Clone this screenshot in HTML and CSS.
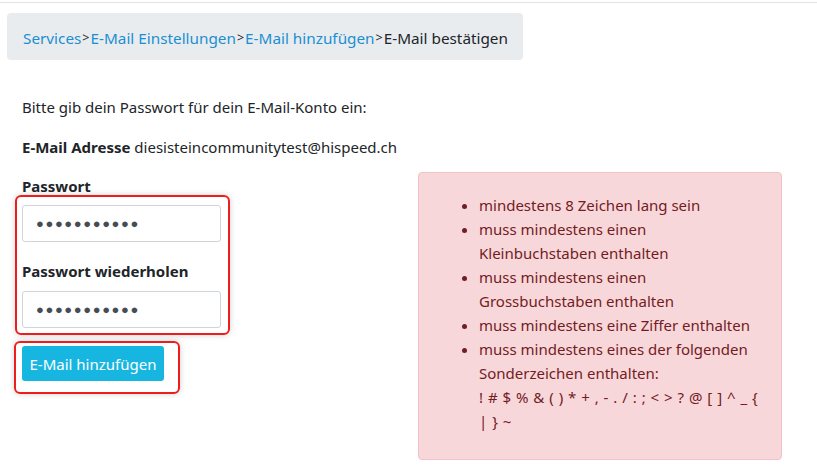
FILE: index.html
```html
<!DOCTYPE html>
<html lang="de">
<head>
<meta charset="utf-8">
<link rel="stylesheet" href="styles.css">
</head>
<body>
<div class="topline"></div>
<nav class="breadcrumb">
  <a href="#">Services</a><span class="sep">&gt;</span><a href="#">E-Mail Einstellungen</a><span class="sep">&gt;</span><a href="#">E-Mail hinzufügen</a><span class="sep">&gt;</span><span class="current">E-Mail bestätigen</span>
</nav>
<main class="content">
  <p class="intro">Bitte gib dein Passwort für dein E-Mail-Konto ein:</p>
  <p class="address"><strong>E-Mail Adresse</strong> diesisteincommunitytest@hispeed.ch</p>
  <div class="row">
    <div class="form-col">
      <label class="label first">Passwort</label>
      <div class="mark mark-fields">
        <div class="input">●●●●●●●●●●●</div>
        <label class="label second">Passwort wiederholen</label>
        <div class="input">●●●●●●●●●●●</div>
      </div>
      <div class="mark mark-button">
        <button class="btn">E-Mail hinzufügen</button>
      </div>
    </div>
    <div class="alert">
      <ul class="rules">
        <li>mindestens 8 Zeichen lang sein</li>
        <li>muss mindestens einen<br>Kleinbuchstaben enthalten</li>
        <li>muss mindestens einen<br>Grossbuchstaben enthalten</li>
        <li>muss mindestens eine Ziffer enthalten</li>
        <li>muss mindestens eines der folgenden<br>Sonderzeichen enthalten:<br><span class="chars">! # $ % &amp; ( ) * + , - . / : ; &lt; &gt; ? @ [ ] ^ _ {<br>| } ~</span></li>
      </ul>
    </div>
  </div>
</main>
</body>
</html>
```
FILE: styles.css
```css
* { box-sizing: border-box; }
html, body { margin: 0; padding: 0; background: #fff; }
body {
  font-family: "Noto Sans", "Open Sans", sans-serif;
  font-size: 15px;
  color: #212529;
  width: 817px;
  height: 471px;
  overflow: hidden;
}
.topline {
  margin-top: 2px;
  height: 1px;
  background: #e3e3e3;
}
.breadcrumb {
  margin: 10px 0 0 7px;
  width: 516px;
  height: 47px;
  background: #e9ecef;
  border-radius: 4px;
  padding: 2px 16px 0;
  display: flex;
  align-items: center;
  font-size: 15.3px;
  white-space: nowrap;
}
.breadcrumb a { color: #1a8fd1; text-decoration: none; }
.breadcrumb .sep { color: #212529; padding: 0 1px; font-size: 12.5px; }
.breadcrumb .current { color: #212529; }
.content { padding: 0 0 0 22px; }
.intro { margin: 35px 0 0; line-height: 24px; }
.address { margin: 16px 0 0; line-height: 24px; }
strong { font-weight: 700; }
.row { display: flex; margin-top: 11px; align-items: flex-start; }
.form-col { width: 396px; display: flex; flex-direction: column; align-items: flex-start; padding-top: 4px; }
.label { display: block; font-weight: 700; line-height: 24px; }
.label.first { margin-bottom: -3px; }
.label.second { margin: 17px 0 8px; }
.mark {
  border: 2px solid #ef1c1c;
  border-radius: 6px;
  box-shadow: 0 0 6px rgba(0,0,0,0.18);
}
.mark-fields {
  margin-left: -7px;
  padding: 8px 7px 5px 5px;
}
.input {
  width: 199px;
  height: 37px;
  border: 1px solid #ced4da;
  border-radius: 3px;
  background: #fff;
  color: #454c54;
  font-size: 13px;
  letter-spacing: 1.6px;
  line-height: 35px;
  padding-left: 13px;
  white-space: nowrap;
  overflow: hidden;
}
.mark-button {
  margin: 6px 0 0 -8px;
  padding: 3px 14px 11px 6px;
}
.btn {
  display: block;
  font-family: inherit;
  font-size: 15px;
  color: #fff;
  background: #17b6e1;
  border: 0;
  border-radius: 3px;
  width: 142px;
  height: 35px;
  padding: 0;
}
.alert {
  margin-top: 2px;
  width: 364px;
  height: 288px;
  background: #f8d7da;
  border: 1px solid #f5c2c7;
  border-radius: 4px;
  color: #721c24;
  padding: 20px 20px 20px 20px;
}
.rules {
  margin: 0;
  padding-left: 40px;
  line-height: 24px;
}
.chars { word-spacing: 1px; }
```
